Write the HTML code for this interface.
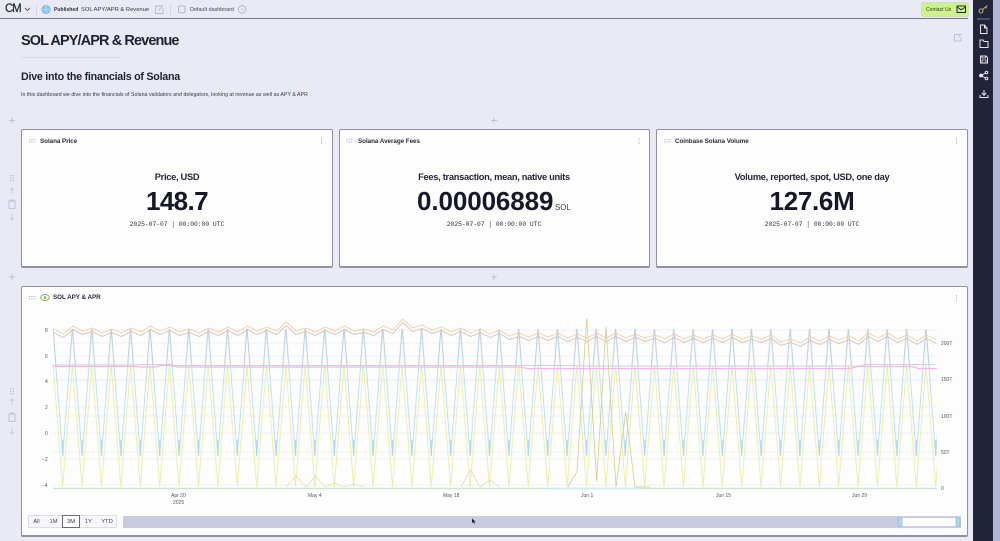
<!DOCTYPE html>
<html><head><meta charset="utf-8"><style>
html,body{margin:0;padding:0;width:1000px;height:541px;overflow:hidden;background:#e9eaf6;font-family:"Liberation Sans",sans-serif;color:#1e2030}
div,span{position:absolute;white-space:nowrap}
.card{background:#fdfdfe;border:1px solid #8f91a3;border-bottom:2px solid #8f91a3;border-radius:2px;box-sizing:border-box}
.ct{font-size:6.3px;font-weight:bold;color:#2a2c3c;line-height:10px;top:137px;letter-spacing:-.05px}
.lab{font-size:9.3px;font-weight:bold;color:#25273a;top:170px;line-height:14px;text-align:center;letter-spacing:-.3px}
.num{font-size:26px;font-weight:bold;color:#15172a;top:186px;line-height:30px;text-align:center}
.ts{font-family:"Liberation Mono",monospace;font-size:6.3px;color:#2e3040;top:220px;line-height:10px;text-align:center}
.ax{font-size:5px;color:#555766;line-height:8px}
.btn{top:515px;height:13px;line-height:14px;font-size:5.8px;color:#44465a;text-align:center;box-sizing:border-box}
</style></head><body>

<div style="left:0;top:18px;width:968px;height:1px;background:#77798a"></div>
<div style="left:5px;top:3px;font-size:11.5px;line-height:13px;letter-spacing:-1.2px;color:#23253a;-webkit-text-stroke:.2px #23253a">CM</div>
<svg style="position:absolute;left:0;top:0" width="1000" height="541" viewBox="0 0 1000 541" fill="none">
 <path d="M25 8l2.500 2.500L30 8" stroke="#55576a" stroke-width=".9"/>
 <path d="M36.500 4v11M170.500 4v11" stroke="#cfd1e0" stroke-width=".8"/>
 <circle cx="46" cy="9.500" r="4.200" fill="#8fc4ec" stroke="#6ba9df" stroke-width=".6"/>
 <path d="M41.800 9.500h8.400M46 5.300v8.400" stroke="#cfe6f8" stroke-width=".6"/>
 <path d="M162 6h-6.500v7.500H163V8M158.500 10.500l4.500-5" stroke="#b8bace" stroke-width=".9"/>
 <rect x="178.500" y="6" width="6.500" height="6.800" rx="1" stroke="#a9abc0" stroke-width=".8"/>
 <circle cx="242" cy="9.500" r="3.800" stroke="#b0b2c6" stroke-width=".8"/>
 <path d="M242 8v3" stroke="#b0b2c6" stroke-width=".6"/>
 <path d="M961 34.500h-6.500v6.500h6.500v-4M957.500 38l4-4.500" stroke="#bcbed8" stroke-width=".9"/>
</svg>
<div style="left:54px;top:5px;font-size:5.100px;font-weight:bold;line-height:10px;color:#2d2f40">Published</div>
<div style="left:81px;top:5px;font-size:5.800px;line-height:10px;color:#33354a">SOL APY/APR &amp; Revenue</div>
<div style="left:190px;top:5px;font-size:5.400px;line-height:10px;color:#44465a">Default dashboard</div>
<div style="left:922px;top:3px;width:46px;height:13px;background:#cdf28b;border-radius:1px;box-shadow:0 0 0 .5px #b3d978"></div>
<div style="left:926px;top:5px;font-size:5.100px;line-height:11px;color:#2f3a24">Contact Us</div>
<svg style="position:absolute;left:956px;top:5px" width="11" height="9" fill="none"><rect x="1" y="1" width="8.500" height="6.500" stroke="#1f2430" stroke-width="1"/><path d="M1 2l4.200 2.800L9.500 2" stroke="#1f2430" stroke-width=".9"/></svg>

<div style="left:973px;top:0;width:20px;height:541px;background:#22253a"></div>
<div style="left:993px;top:0;width:7px;height:541px;background:#b2b5d8"></div>
<svg style="position:absolute;left:973px;top:0" width="20" height="110" fill="none" stroke="#e6e7ee" stroke-width="1">
 <circle cx="8" cy="11" r="2" stroke="#c9b27a"/><path d="M9.500 9.500l5-4M12.500 7l1.200 1.200" stroke="#c9b27a"/>
 <path d="M4 19h13" stroke="#777a8c"/>
 <path d="M7.500 25h4l2.500 3v5.500H7.500zM11.500 25v3H14"/>
 <path d="M7 40h3l1 1.500h4v6H7z"/>
 <path d="M7.500 56h5.500l1.500 1.500V63h-7z"/><path d="M9 56v2h3.500v-2M9 63v-3h4v3" stroke-width=".8"/>
 <circle cx="8" cy="75.500" r="1.400" fill="#e6e7ee"/><circle cx="13.500" cy="72.500" r="1.300"/><circle cx="13.500" cy="78.500" r="1.300"/><path d="M9 75l3.500-2M9 76l3.500 2"/>
 <path d="M11 90v5M8.800 93l2.200 2.300 2.200-2.300M7 95v2.500h8V95"/>
</svg>

<div style="left:21px;top:31.500px;font-size:14.500px;font-weight:bold;line-height:18px;letter-spacing:-.9px;color:#1f2132">SOL APY/APR &amp; Revenue</div>
<div style="left:21px;top:57px;width:100px;height:1px;background:#d8daec"></div>
<div style="left:21px;top:69.500px;font-size:10.700px;font-weight:bold;line-height:14px;letter-spacing:-.25px;color:#1f2132">Dive into the financials of Solana</div>
<div style="left:21px;top:91px;font-size:5.200px;line-height:9px;color:#33354a;letter-spacing:.05px">In this dashboard we dive into the financials of Solana validators and delegators, looking at revenue as well as APY &amp; APR</div>

<div class="card" style="left:21px;top:129px;width:312px;height:138.500px"></div>
<div class="card" style="left:339px;top:129px;width:311px;height:138.500px"></div>
<div class="card" style="left:656px;top:129px;width:312px;height:138.500px"></div>
<div class="card" style="left:21px;top:286px;width:947px;height:251px"></div>

<div class="ct" style="left:40px">Solana Price</div>
<div class="ct" style="left:358px">Solana Average Fees</div>
<div class="ct" style="left:675px">Coinbase Solana Volume</div>
<div class="ct" style="left:53px;top:293px;font-size:6.300px">SOL APY &amp; APR</div>

<div class="lab" style="left:77px;width:200px">Price, USD</div>
<div class="lab" style="left:394px;width:200px">Fees, transaction, mean, native units</div>
<div class="lab" style="left:712px;width:200px">Volume, reported, spot, USD, one day</div>

<div class="num" style="left:77px;width:200px;letter-spacing:-.6px">148.7</div>
<div class="num" style="left:417px;letter-spacing:-.1px">0.00006889</div>
<div style="left:555px;top:203px;font-size:8px;line-height:10px;color:#44465a;letter-spacing:-.1px">SOL</div>
<div class="num" style="left:712px;width:200px;letter-spacing:-.3px">127.6M</div>

<div class="ts" style="left:77px;width:200px">2025-07-07 &#9474; 00:00:00 UTC</div>
<div class="ts" style="left:394px;width:200px">2025-07-07 &#9474; 00:00:00 UTC</div>
<div class="ts" style="left:712px;width:200px">2025-07-07 &#9474; 00:00:00 UTC</div>

<div class="ax" style="left:45px;top:327px">8</div>
<div class="ax" style="left:45px;top:353px">6</div>
<div class="ax" style="left:45px;top:378px">4</div>
<div class="ax" style="left:45px;top:404px">2</div>
<div class="ax" style="left:45px;top:430px">0</div>
<div class="ax" style="left:42px;top:456px">&#8722;2</div>
<div class="ax" style="left:42px;top:482px">&#8722;4</div>
<div class="ax" style="left:941px;top:340px">200T</div>
<div class="ax" style="left:941px;top:376px">150T</div>
<div class="ax" style="left:941px;top:413px">100T</div>
<div class="ax" style="left:941px;top:449px">50T</div>
<div class="ax" style="left:941px;top:485px">0</div>
<div class="ax" style="left:171px;top:492px">Apr 20</div>
<div class="ax" style="left:173px;top:499px">2025</div>
<div class="ax" style="left:308px;top:492px">May 4</div>
<div class="ax" style="left:443px;top:492px">May 18</div>
<div class="ax" style="left:581px;top:492px">Jun 1</div>
<div class="ax" style="left:716px;top:492px">Jun 15</div>
<div class="ax" style="left:852px;top:492px">Jun 29</div>

<svg style="position:absolute;left:0;top:0" width="1000" height="541" viewBox="0 0 1000 541" fill="none">
 <defs>
  <pattern id="by" patternUnits="userSpaceOnUse" x="53" y="0" width="19.400" height="541">
   <path d="M0 365L9.700 487 19.400 365" stroke="#ecec9f" stroke-width=".9"/>
   <path d="M0 329L9.700 456 19.400 329" stroke="#b2def3" stroke-width=".9"/>
   <path d="M.3 329L3.200 366M19.100 329L16.200 366" stroke="#bfc1cc" stroke-width=".5"/>
   <path d="M9.700 440V456" stroke="#a4d6f0" stroke-width="1"/>
  </pattern>
  <path id="zz" d="M53.500 329L63.200 334 72.900 326 82.600 331 92.300 328 102 333 111.700 329 121.400 333 131.100 328 140.800 332 150.500 326 160.200 331 169.900 327 179.600 332 189.300 329 199 333 208.700 328 218.400 332 228.100 327 237.800 332 247.500 326 257.200 331 266.900 327 276.600 331 286.300 322 296 331 305.700 328 315.400 332 325.100 327 334.800 331 344.500 326 354.200 331 363.900 329 373.600 332 383.300 326 393 330 402.700 319 412.400 328 422.100 325 431.800 330 441.500 327 451.200 332 460.900 328 470.600 333 480.300 329 490 334 499.700 330 509.400 336 519.100 333 528.800 337 538.500 333 548.200 337 557.900 333 567.600 338 577.300 334 587 338 596.700 333 606.400 338 616.100 333 625.800 338 635.500 334 645.200 338 654.900 335 664.600 339 674.300 334 684 339 693.700 335 703.400 339 713.100 335 722.800 339 732.500 334 742.200 339 751.900 336 761.600 339 771.300 335 781 342 790.700 339 800.400 343 810.100 337 819.800 341 829.500 336 839.200 340 848.900 336 858.600 341 868.300 333 878 338 887.700 333 897.400 339 907.100 335 916.800 341 926.500 335 936.500 340"/>
 </defs>
 <path d="M53 330H937M53 356H937M53 381H937M53 407H937M53 433H937M53 459H937M53 485H937M53 343H937M53 379.500H937M53 416H937M53 452H937" stroke="#f1f1f4" stroke-width="1"/>
 <rect x="53" y="320" width="884" height="170" fill="url(#by)"/>
 <use href="#zz" stroke="#f5cc9f" stroke-width=".9"/>
 <use href="#zz" transform="translate(0,3.500)" stroke="#d3c0b8" stroke-width=".9"/>
 <path d="M53 365H136L140 364.500H170L175 365.500H400H560L590 366H860L865 364.500H935" stroke="#d0d0d6" stroke-width=".9"/>
 <path d="M53 366.500H135L140 367H155L160 365.500H170L178 367H520L528 368.500H850L858 366.500H912L918 368.500H937" stroke="#f5b4ed" stroke-width="1.300"/>
 <path d="M286 487L296 476 306 487 315.500 476 325 487 334.500 483 344 487 354 484 363.500 487M461 487L470.500 470 480 487 490 480 499.500 487" stroke="#e0e0ac" stroke-width=".8"/>
 <path d="M567.700 487L577 471.700 586.700 318 596.700 481.700 606 326.700 616 487 625.700 411.700 635 487 650 487" stroke="#cfcf90" stroke-width=".8"/>
 <path d="M53 488.500H937" stroke="#c9e8cf" stroke-width="1.600"/>
 <path d="M555 488.500H640" stroke="#cdeaf6" stroke-width="1.600"/>

 <g stroke="#b5b7cb" stroke-width=".8">
  <path d="M9 120.500h6M12 117.500v6M9 277h6M12 274v6M491 120.500h6M494 117.500v6M491 277h6M494 274v6"/>
  <path d="M12 188v6M10 190l2-2 2 2M12 214v6M10 218l2 2 2-2M12 399v6M10 401l2-2 2 2M12 428v6M10 432l2 2 2-2" stroke="#c5c7d8"/>
  <path d="M9 201h6v7.500H9zM10.500 201v-1h3v1M9 414h6v7.500H9zM10.500 414v-1h3v1"/>
 </g>
 <g fill="#bcbed0">
  <rect x="10" y="175" width="1.300" height="1.300"/><rect x="12.700" y="175" width="1.300" height="1.300"/><rect x="10" y="177.500" width="1.300" height="1.300"/><rect x="12.700" y="177.500" width="1.300" height="1.300"/><rect x="10" y="180" width="1.300" height="1.300"/><rect x="12.700" y="180" width="1.300" height="1.300"/>
  <rect x="10" y="388" width="1.300" height="1.300"/><rect x="12.700" y="388" width="1.300" height="1.300"/><rect x="10" y="390.500" width="1.300" height="1.300"/><rect x="12.700" y="390.500" width="1.300" height="1.300"/><rect x="10" y="393" width="1.300" height="1.300"/><rect x="12.700" y="393" width="1.300" height="1.300"/>
 </g>
 <g stroke="#b0b2c8" stroke-width="1" stroke-dasharray="1.200 1">
  <path d="M29 139.700h7M29 142h7M346.500 139.700h7M346.500 142h7M664 139.700h7M664 142h7M29 296.500h7M29 298.700h7"/>
  <path d="M321.500 138v6.500M639 138v6.500M956.500 138v6.500M956.500 295v6.500" stroke-dasharray="1.200 1.200"/>
 </g>
 <ellipse cx="45" cy="297.500" rx="4.300" ry="3" stroke="#7fb24a" stroke-width="1"/>
 <circle cx="45" cy="297.500" r="1.300" fill="#7fb24a"/>

 <rect x="123" y="516" width="838" height="12" rx="1" fill="#c9cbe2"/>
 <rect x="899" y="518" width="59" height="8" fill="#fdfdff"/>
 <rect x="898" y="518" width="4" height="8" fill="#a9dcea" stroke="#8fa4cf" stroke-width=".5"/>
 <rect x="956" y="518" width="4" height="8" fill="#a9dcea" stroke="#8fa4cf" stroke-width=".5"/>
 <path d="M472 518.500v4.500l1.200-1 1 2 .8-.4-.9-1.900h1.500z" fill="#1c1e2c"/>
</svg>

<div style="left:28px;top:515px;width:89px;height:13px;background:#f6f6fb;border:.5px solid #dcdde9;box-sizing:border-box;border-radius:1px"></div>
<div class="btn" style="left:28px;width:17px">All</div>
<div class="btn" style="left:45px;width:17px">1M</div>
<div class="btn" style="left:62px;width:18px;border:1px solid #6a6c7c;background:#fdfdfe;color:#33354a;line-height:12px">3M</div>
<div class="btn" style="left:80px;width:17px">1Y</div>
<div class="btn" style="left:97px;width:20px">YTD</div>
</body></html>
